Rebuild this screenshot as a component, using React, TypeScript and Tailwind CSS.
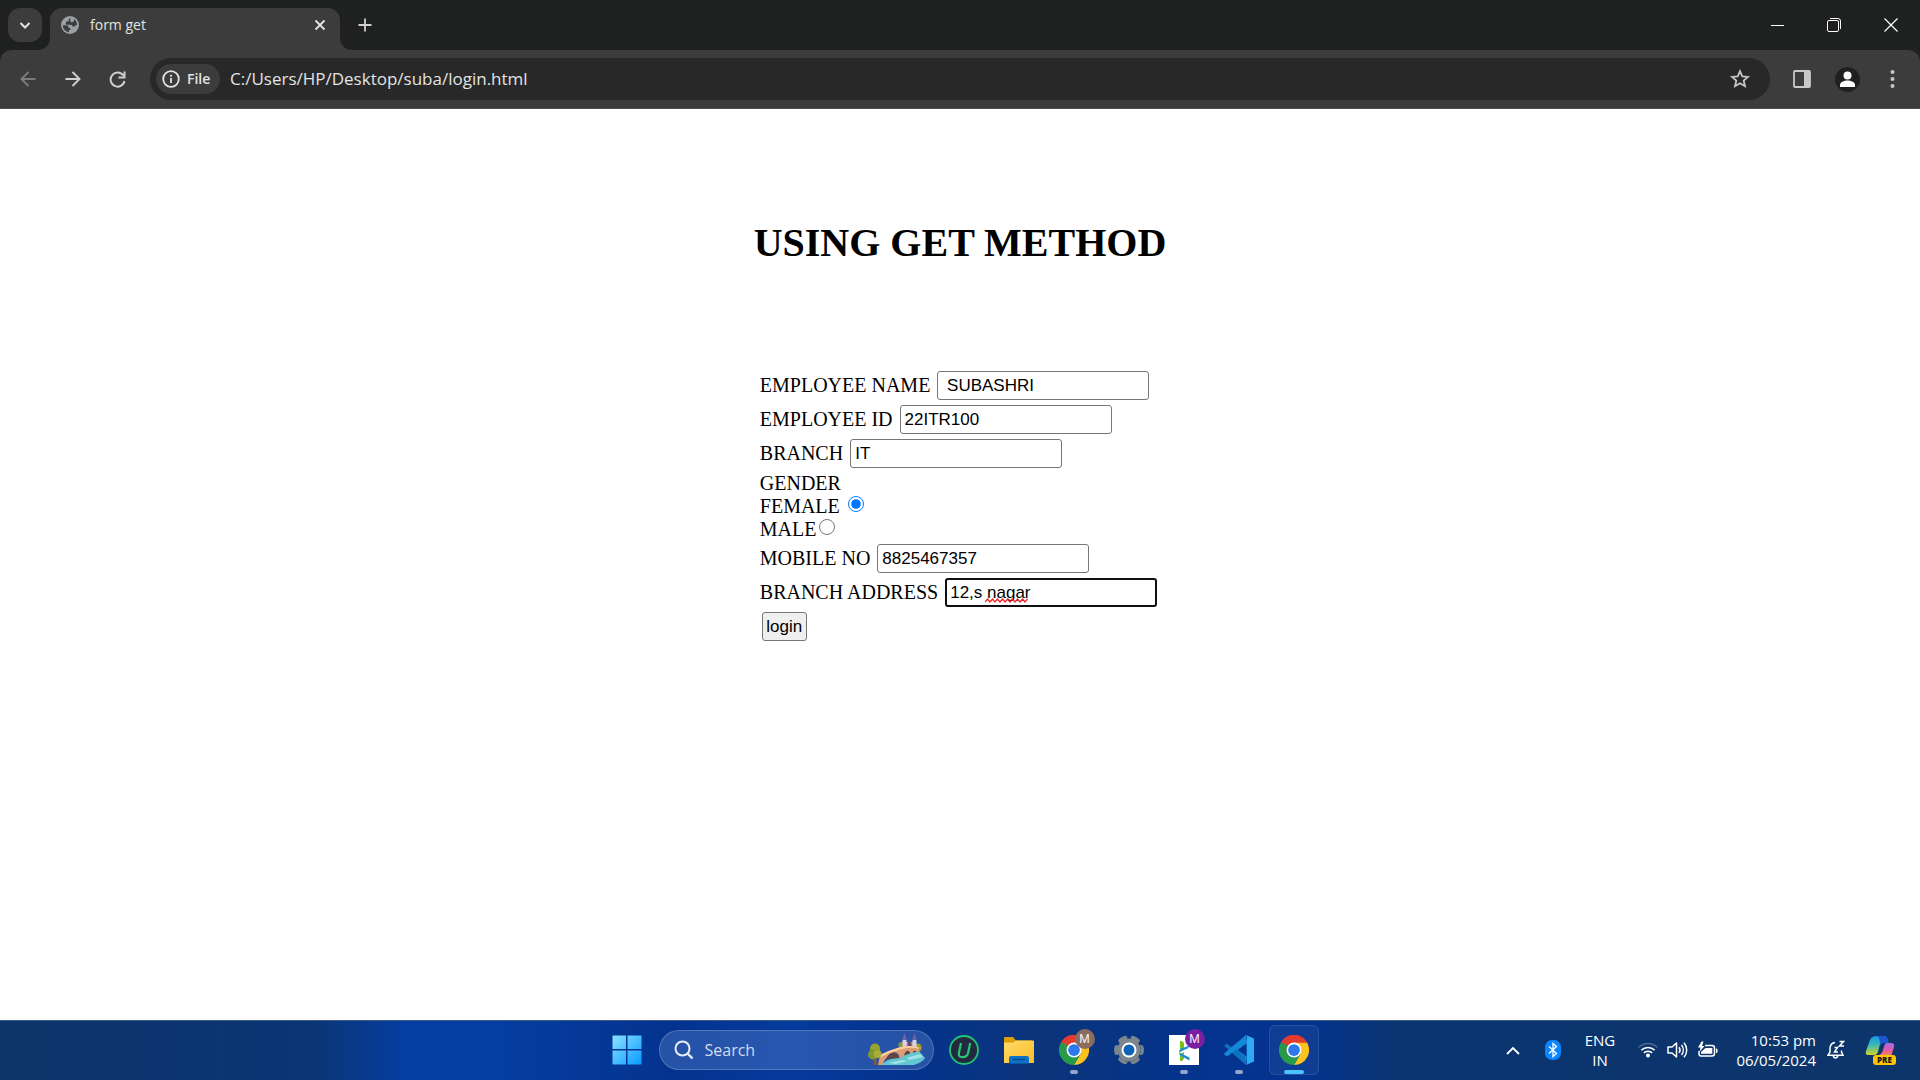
import React from "react";

const serif = "font-['Liberation_Serif',serif]";
const arial = "font-['Liberation_Sans',sans-serif]";

function ChromeLogo() {
  return (
    <svg width="30" height="30" viewBox="0 0 48 48" aria-hidden="true">
      <path d="M24 24 3.2 12A24 24 0 0 1 44.8 12Z" fill="#e33b2e" />
      <path d="M44.8 12A24 24 0 0 1 24 48L34.4 30 24 12Z" fill="#fcc31e" />
      <path d="M3.2 12 13.6 30 24 36 34.4 30 24 48A24 24 0 0 1 3.2 12Z" fill="#269b4b" />
      <path d="M3.2 12A24 24 0 0 1 44.8 12H24L13.6 30Z" fill="#e33b2e" />
      <path d="M3.2 12 13.6 30 18 26 12 15Z" fill="#269b4b" />
      <circle cx="24" cy="24" r="12" fill="#fff" />
      <circle cx="24" cy="24" r="9.4" fill="#2f78ea" />
    </svg>
  );
}

function Castle() {
  return (
    <svg width="58" height="34" viewBox="0 0 58 34" aria-hidden="true">
      <path d="M42 20 51 18 57 25Q55 29 46 32H12L20 27Z" fill="#5fc6d2" />
      <path d="M38 25 52 21 55 24 42 27ZM20 30 34 27 40 28 28 31Z" fill="#a2e3e6" />
      <circle cx="33.500" cy="12" r="3" fill="#8c9a35" />
      <circle cx="49.500" cy="14.500" r="4" fill="#a3a02c" />
      <path d="M35 9H48V16H35Z" fill="#b9a6c2" />
      <path d="M34.500 7H38.500V16H34.500ZM44.500 7H48.500V16H44.500Z" fill="#ded0e0" />
      <path d="M36.500 0 38.800 7H34.200ZM46.500 0 48.800 7H44.200Z" fill="#75619f" />
      <path d="M39.500 10Q41.500 6 43.500 10V13H39.500Z" fill="#6b4a6c" />
      <path d="M40 13H43V16H40Z" fill="#4c3450" />
      <path d="M12 22Q22 17 31 14.500 41 11.500 51 14.500V18.500L48.500 19Q46.500 15 44.500 20L42.500 20.500Q39 14 36 23L32 25Q29 15 20 23L17 26.500 14 32H10Z" fill="#dd9c72" />
      <path d="M12 22Q22 17 31 14.500 41 11.500 51 14.500V15.500Q41 13.500 32 16.500 22 19 12 24.500Z" fill="#fbd2a4" />
      <path d="M18 26.500Q22 17 29 20.500 31 22 31.500 25ZM36 22.500Q38 17.500 40 18 41.500 18.500 42 20.500ZM45 19.500Q46.500 16.500 48 19Z" fill="#5e4547" />
      <path d="M6 22H8.500V32H6Z" fill="#8a5a2c" />
      <circle cx="7" cy="15.500" r="5" fill="#93a52f" />
      <circle cx="5" cy="21.500" r="5" fill="#7d9a2c" />
      <circle cx="9.500" cy="21" r="4" fill="#a9ab34" />
    </svg>
  );
}

function Gear() {
  return (
    <svg width="30" height="30" viewBox="0 0 30 30" aria-hidden="true">
      <g fill="#7d868c">
        <circle cx="15" cy="15" r="11.500" />
        {[0, 60, 120].map((a) => (
          <path key={a} transform={`rotate(${a} 15 15)`} d="M1 10.500 4 10v10l-3-.5Q-.8 15 1 10.500ZM29 10.500 26 10v10l3-.5q1.800-4.500 0-9ZM3.500 11.500h23v7h-23z" />
        ))}
      </g>
      <circle cx="15" cy="15" r="7.500" fill="#fff" />
      <circle cx="15" cy="15" r="5.500" fill="#0c63b6" />
    </svg>
  );
}

function Badge({ color }: { color: string }) {
  return (
    <span className={`absolute top-1 right-1 flex size-5 items-center justify-center rounded-full font-['Roboto',sans-serif] text-xs text-white/90 ${color}`}>
      M
    </span>
  );
}

function TaskItem({ label, running, active, children }: { label: string; running?: boolean; active?: boolean; children: React.ReactNode }) {
  return (
    <button aria-label={label} className={`relative flex size-[50px] items-center justify-center rounded-md ${active ? "border border-white/10 bg-white/5" : ""}`}>
      {children}
      {running && <span className="absolute bottom-px left-[21px] h-1 w-2 rounded-full bg-[#94a6cc]" />}
      {active && <span className="absolute bottom-0 left-[14px] h-1 w-5 rounded-full bg-[#4cc2ff]" />}
    </button>
  );
}

function Field({ id, label, value, children, focused }: { id: string; label: string; value: string; children?: React.ReactNode; focused?: boolean }) {
  return (
    <div className="flex h-[34px] items-center gap-[7px]">
      <label htmlFor={id}>{label}</label>
      <span className="relative flex">
        <input
          id={id}
          type="text"
          defaultValue={value}
          spellCheck={false}
          className={`h-[29px] w-[212px] rounded-[3px] bg-white pt-px text-[17px] outline-none ${arial} ${focused ? "border-2 border-[#101010] px-[3px]" : "border border-[#767676] px-1"}`}
        />
        {children}
      </span>
    </div>
  );
}

function TabStrip() {
  return (
    <header className="flex h-[50px] bg-[#1f2120] text-[#e3e3e3]">
      <button aria-label="Search tabs" className="mt-2 ml-2 flex size-[34px] items-center justify-center rounded-xl bg-[#3c3c3c]">
        <svg width="12" height="12" viewBox="0 0 12 12" fill="none" stroke="#e3e3e3" strokeWidth="2"><path d="M1.500 4 6 8.500 10.500 4" /></svg>
      </button>
      <div className="relative mt-2 ml-2 flex w-[290px] items-center rounded-t-xl bg-[#3c3c3c] pr-[10px] pb-2 pl-[11px]">
        <span className="absolute bottom-0 -left-3 size-3 bg-[#3c3c3c]"><span className="block size-3 rounded-br-xl bg-[#1f2120]" /></span>
        <span className="absolute -right-3 bottom-0 size-3 bg-[#3c3c3c]"><span className="block size-3 rounded-bl-xl bg-[#1f2120]" /></span>
        <svg width="18" height="18" viewBox="0 0 18 18" aria-hidden="true">
          <circle cx="9" cy="9" r="9" fill="#9aa0a6" />
          <path d="M9.300 1.800 7.800 3.500V5.300H5.800L4.800 7V8.800H9.800Q11.600 9 11.600 10.600H13.300Q14.300 10.600 14.600 9.300L16.300 8.800A7.300 7.300 0 0 0 13 3.100V4.300Q13 6.200 11.200 6.200H10.300Q9.400 6.200 9.400 5.300ZM1.700 9.300H5.600Q7.600 9.300 7.600 11.200V12H9.400V14H8V16.300A7.300 7.300 0 0 1 1.700 9.300Z" fill="#3c3c3c" />
        </svg>
        <span className="ml-[11px] text-sm">form get</span>
        <button aria-label="Close tab" className="ml-auto flex size-5 items-center justify-center">
          <svg width="12" height="12" viewBox="0 0 12 12" stroke="#e3e3e3" strokeWidth="1.800"><path d="m1.500 1.500 9 9m0-9-9 9" /></svg>
        </button>
      </div>
      <button aria-label="New tab" className="mt-[11px] ml-[11px] flex size-7 items-center justify-center">
        <svg width="14" height="14" viewBox="0 0 14 14" stroke="#d0d0d0" strokeWidth="1.800"><path d="M7 .5v13M.5 7h13" /></svg>
      </button>
      <div className="ml-auto flex">
        <button aria-label="Minimize" className="flex w-[57px] items-center justify-center">
          <svg width="13" height="13" viewBox="0 0 13 13"><path d="M0 6h13v1H0z" fill="#fff" /></svg>
        </button>
        <button aria-label="Restore" className="flex w-14 items-center justify-center">
          <svg width="14" height="14" viewBox="0 0 14 14" fill="none" stroke="#fff"><rect x=".5" y="2.500" width="11" height="11" rx="1.500" /><path d="M3 .5h8A2.500 2.500 0 0 1 13.500 3v8" /></svg>
        </button>
        <button aria-label="Close" className="flex w-[58px] items-center justify-center">
          <svg width="14" height="14" viewBox="0 0 14 14" stroke="#fff" strokeWidth="1.200"><path d="m.5.5 13 13m0-13-13 13" /></svg>
        </button>
      </div>
    </header>
  );
}

function Toolbar() {
  return (
    <div className="bg-[#1f2120]">
      <div className="flex h-[59px] items-center rounded-t-xl border-b border-[#4d4a4d] bg-[#3c3c3c] text-[#e3e3e3]">
        <nav className="ml-[5px] flex">
          <button aria-label="Back" className="flex w-[45px] justify-center">
            <svg width="16" height="16" viewBox="0 0 16 16" fill="none" stroke="#7c7c7c" strokeWidth="1.900"><path d="M15.500 8H2M8.500 1 1.500 8l7 7" /></svg>
          </button>
          <button aria-label="Forward" className="flex w-[45px] justify-center">
            <svg width="16" height="16" viewBox="0 0 16 16" fill="none" stroke="#d0d0d0" strokeWidth="1.900"><path d="M.5 8H14M7.500 1l7 7-7 7" /></svg>
          </button>
          <button aria-label="Reload" className="flex w-[45px] justify-center">
            <svg width="17" height="17" viewBox="0 0 17 17" fill="none" stroke="#d0d0d0" strokeWidth="2"><path d="M14.300 4.500A7 7 0 1 0 15.500 10M15.500.5V6.500H9.500" /></svg>
          </button>
        </nav>
        <div className="ml-[10px] flex h-[42px] flex-1 items-center rounded-full bg-[#282828] pl-[6px]">
          <button className="flex h-[30px] w-[64px] items-center gap-[7px] rounded-full bg-[#3c3c3c] pl-[6px] text-sm font-semibold">
            <svg width="18" height="18" viewBox="0 0 18 18" fill="none" stroke="#e3e3e3" strokeWidth="1.800"><circle cx="9" cy="9" r="7.800" /><path d="M9 8v5M9 4.800v1.900" /></svg>
            File
          </button>
          <input aria-label="Address" defaultValue="C:/Users/HP/Desktop/suba/login.html" className="ml-[10px] min-w-0 flex-1 bg-transparent text-[17px] outline-none" />
          <button aria-label="Bookmark this tab" className="mr-5">
            <svg width="20" height="20" viewBox="0 0 20 20" fill="none" stroke="#c7c7c7" strokeWidth="1.800"><path d="M10 2.200 12.300 7.400 18 7.900 13.700 11.600 15 17.200 10 14.200 5 17.200 6.300 11.600 2 7.900 7.700 7.400Z" /></svg>
          </button>
        </div>
        <button aria-label="Side panel" className="ml-[23px]">
          <svg width="18" height="18" viewBox="0 0 18 18"><rect x="1" y="1" width="16" height="16" rx="1" fill="none" stroke="#c7c7c7" strokeWidth="1.800" /><path d="M11 1h6v16h-6z" fill="#c7c7c7" /></svg>
        </button>
        <button aria-label="Profile" className="ml-6">
          <svg width="25" height="25" viewBox="0 0 25 25"><circle cx="12.500" cy="12.500" r="12.500" fill="#1f2120" /><circle cx="12.500" cy="8.500" r="4" fill="#fff" /><path d="M5 20v-2c0-3 4-4.500 7.500-4.500S20 15 20 18v2z" fill="#fff" /></svg>
        </button>
        <button aria-label="Menu" className="mr-[25px] ml-[30px]">
          <svg width="5" height="18" viewBox="0 0 5 18" fill="#c7c7c7"><circle cx="2.500" cy="2" r="2" /><circle cx="2.500" cy="9" r="2" /><circle cx="2.500" cy="16" r="2" /></svg>
        </button>
      </div>
    </div>
  );
}

function Taskbar() {
  return (
    <footer className="grid h-[60px] grid-cols-[1fr_auto_1fr] items-center border-t border-[#3c5a86] bg-[linear-gradient(90deg,#0d356b_0%,#0b3573_16%,#053da0_21%,#053da0_26%,#04338f_35%,#053a9c_41%,#04338f_47%,#0b3479_54%,#043390_63%,#04338f_68%,#0b3570_73%,#0d356b_100%)] pb-px text-white">
      <div />
      <div className="flex items-center gap-[5px]">
        <TaskItem label="Start">
          <svg width="30" height="30" viewBox="0 0 30 30">
            <defs><linearGradient id="win" x1="0" y1="0" x2="1" y2="1"><stop offset="0" stopColor="#8be2ff" /><stop offset="1" stopColor="#069bff" /></linearGradient></defs>
            <path d="M1 .5H14V14H.5V1ZM15.500.5H29l.5.5V14h-14ZM.5 15.500H14V29.500H1L.5 29ZM15.500 15.500h14V29l-.5.5H15.500Z" fill="url(#win)" />
          </svg>
        </TaskItem>
        <label className="ml-[2px] flex h-10 w-[275px] items-center rounded-full border border-white/20 bg-[#5b83cc]/40 pr-[7px] pl-[14px]">
          <svg width="20" height="20" viewBox="0 0 20 20" fill="none" stroke="#e8edf8" strokeWidth="2"><circle cx="8.500" cy="8.500" r="7" /><path d="m13.500 13.500 5 5" strokeWidth="2.400" /></svg>
          <input aria-label="Search" placeholder="Search" className="ml-[11px] w-0 flex-1 bg-transparent text-base outline-none placeholder:text-[#d3dcef]" />
          <Castle />
        </label>
        <TaskItem label="Uninstaller">
          <svg width="30" height="30" viewBox="0 0 30 30"><circle cx="15" cy="15" r="14" fill="#242a3e" stroke="#1fc672" strokeWidth="1.800" /><path d="M12 8 10 17.500C9.300 21 10.500 22.200 13.500 22.200S18.500 21 19.200 17.500L21.200 8" fill="none" stroke="#27c77b" strokeWidth="2.200" /></svg>
        </TaskItem>
        <TaskItem label="File Explorer">
          <svg width="30" height="28" viewBox="0 0 30 28">
            <defs><linearGradient id="fold" x1="0" y1="0" x2="1" y2="1"><stop offset="0" stopColor="#ffdc6b" /><stop offset="1" stopColor="#fdbb26" /></linearGradient></defs>
            <path d="M0 2Q0 1 1 1H9L12 4.500H28V10H0Z" fill="#dc9d05" /><path d="M0 6.500H9L12 4.500H29Q30 4.500 30 5.500V27H0Z" fill="url(#fold)" /><path d="M5 27.500V22Q5 20 7 20H23Q25 20 25 22V27.500Z" fill="#0b73c9" /><path d="M9 23.500H21" stroke="#064a8c" strokeWidth="1.500" />
          </svg>
        </TaskItem>
        <TaskItem label="Chrome" running><ChromeLogo /><Badge color="bg-[#8a6c61]" /></TaskItem>
        <TaskItem label="Settings"><Gear /></TaskItem>
        <TaskItem label="Notes" running>
          <svg width="30" height="30" viewBox="0 0 30 30"><path d="M0 0h30v30H0z" fill="#fff" /><path d="M10.500 6C14 6 15 7 15 9V14L11 17V6ZM15 17 11 19V26C14.500 26 15 24 15 22Z" fill="#7bbd1e" /><path d="M20 10.500Q20 14 16 14.500L10 17.500Q10 13.500 14 13ZM10 17.500 20.500 22.500V25.500L12 21Q10 20 10 17.500Z" fill="#1a8fd4" /></svg>
          <Badge color="bg-[#7a1fa2]" />
        </TaskItem>
        <TaskItem label="Visual Studio Code" running>
          <svg width="30" height="30" viewBox="0 0 30 30"><path d="M22 0 8.500 13 3 8.800 1 9.700 .3 11 22 30 23 22V8Z" fill="#0b74c0" /><path d="M22 30 21 21.500 12 15 3 21.400 .3 19.500V18.300L22 0 23 8.500Z" fill="#1488d8" /><path d="M22 0 30 3.500V26.500L22 30Q23 29 23 27.500V2.500Q23 1 22 0Z" fill="#2fa9f4" /><path d="M22.500 8.500v13L13.500 15Z" fill="#04338f" /></svg>
        </TaskItem>
        <TaskItem label="Chrome window" active><ChromeLogo /></TaskItem>
      </div>
      <div className="flex items-center justify-end text-[15px]">
        <button aria-label="Hidden icons" className="mr-[25px]">
          <svg width="14" height="9" viewBox="0 0 14 9" fill="none" stroke="#fff" strokeWidth="1.800"><path d="m1 8 6-6 6 6" /></svg>
        </button>
        <button aria-label="Bluetooth" className="mr-[21px]">
          <svg width="16" height="20" viewBox="0 0 16 20"><rect width="16" height="20" rx="7" fill="#0a84ff" /><path d="m4 6.500 7.500 7L8 16.500v-13l3.500 3-7.500 7" fill="none" stroke="#fff" strokeWidth="1.300" /></svg>
        </button>
        <button className="w-9 text-center leading-5">ENG<br />IN</button>
        <button aria-label="Network, sound and battery" className="ml-5 flex items-center gap-[9px]">
          <svg width="20" height="16" viewBox="0 0 20 16" fill="none" stroke="#fff" strokeWidth="1.500"><path d="M.7 5.500a13 13 0 0 1 18.600 0" stroke="#ffffff40" /><path d="M3.300 8.200a9.500 9.500 0 0 1 13.400 0M5.800 10.900a6 6 0 0 1 8.400 0" /><circle cx="10" cy="13.500" r="2" fill="#fff" stroke="none" /></svg>
          <svg width="21" height="18" viewBox="0 0 21 18" fill="none" stroke="#fff" strokeWidth="1.500" strokeLinejoin="round"><path d="M1 6h4l4.500-4v14L5 12H1ZM12 6.200a4.500 4.500 0 0 1 0 5.600M14.500 4a8 8 0 0 1 0 10M17 1.800a11 11 0 0 1 0 14.400" /></svg>
          <svg width="21" height="18" viewBox="0 0 21 18"><path d="M8 4.500h7q2.500 0 2.500 2.500v5.500q0 2.500-2.500 2.500H4q-2 0-2-2.500V10" fill="none" stroke="#fff" strokeWidth="1.500" /><path d="M8.500 7H15.300V12.800H4V11Z" fill="#fff" /><path d="M19 7.500q1.500 0 1.500 1v2.500q0 1-1.500 1zM4.500.5 1 6.500h2.500L2.500 11 7.500 5H5L6.500.5Z" fill="#fff" /></svg>
        </button>
        <button className="ml-4 w-[82px] text-right leading-5">10:53 pm<br />06/05/2024</button>
        <button aria-label="Notifications" className="ml-[11px]">
          <svg width="18" height="20" viewBox="0 0 18 20" fill="none" stroke="#fff" strokeWidth="1.500"><path d="M8 2.500Q3.500 3 3 8v4L1 15.200H16L14.500 12V10.500M6 16q2.500 4 5 0M7.500 7.500h3L7.500 12h3.500M12.500 1.500h4l-4 4.500H17" /></svg>
        </button>
        <button aria-label="Copilot" className="mr-6 ml-5">
          <svg width="31" height="30" viewBox="0 0 31 30">
            <defs>
              <linearGradient id="cpa" x1="0" y1="0" x2="0" y2="1"><stop offset="0" stopColor="#189de0" /><stop offset=".45" stopColor="#36b6ba" /><stop offset="1" stopColor="#d0d728" /></linearGradient>
              <linearGradient id="cpb" x1="0" y1="0" x2="0" y2="1"><stop offset="0" stopColor="#a56be8" /><stop offset=".6" stopColor="#e45ba8" /><stop offset="1" stopColor="#f68157" /></linearGradient>
            </defs>
            <path d="M12 1H19Q21.500 1 22.500 4L23.500 8H18Q15.500 8 14.500 11L13 17Q12 20 9 20H3Q0 20 1 16L5 5Q6.500 1 12 1Z" fill="url(#cpa)" />
            <path d="M12 1H19Q21.500 1 22.500 4L23.500 8H18Q16 8 15 9Q15 3 12 1Z" fill="#1f55d2" />
            <path d="M22 8H26Q30 8 29 12L26.500 20H14Q17 19 18 15L19.500 10Q20 8 22 8Z" fill="url(#cpb)" />
            <rect x="8" y="20" width="23" height="10" rx="3" fill="#fdc400" />
            <text x="19.500" y="28" textAnchor="middle" fontFamily="Open Sans, sans-serif" fontWeight="800" fontSize="8" fill="#1b1b1b">PRE</text>
          </svg>
        </button>
      </div>
    </footer>
  );
}

export default function App() {
  return (
    <div className="flex min-h-screen flex-col bg-white font-['Open_Sans',sans-serif]">
      <TabStrip />
      <Toolbar />
      <main className={`flex-1 text-black ${serif}`}>
        <h1 className="mt-[111px] text-center text-[40px] leading-[46px] font-bold">USING GET METHOD</h1>
        <form className="mx-auto mt-[102px] w-fit pr-[3px] text-[20px] leading-[23px]" onSubmit={(e) => e.preventDefault()}>
          <Field id="name" label="EMPLOYEE NAME" value=" SUBASHRI" />
          <Field id="empid" label="EMPLOYEE ID" value="22ITR100" />
          <Field id="branch" label="BRANCH" value="IT" />
          <fieldset className="pt-[2px]">
            <legend className="contents">GENDER</legend>
            <div className="flex gap-2">
              <label htmlFor="female">FEMALE</label>
              <input id="female" type="radio" name="gender" defaultChecked className="mt-px size-4 accent-[#0075ff]" />
            </div>
            <div className="flex gap-[3px]">
              <label htmlFor="male">MALE</label>
              <input id="male" type="radio" name="gender" className="mt-px size-4 accent-[#0075ff]" />
            </div>
          </fieldset>
          <Field id="mobile" label="MOBILE NO" value="8825467357" />
          <Field id="address" label="BRANCH ADDRESS" value="12,s nagar" focused>
            <svg className="absolute top-5 left-10" width="43" height="5" viewBox="0 0 43 5" fill="none" stroke="#f02020" strokeWidth="1.200" aria-hidden="true">
              <path d="M0 4 2.500 1 5 4 7.500 1 10 4 12.500 1 15 4 17.500 1 20 4 22.500 1 25 4 27.500 1 30 4 32.500 1 35 4 37.500 1 40 4 42.500 1" />
            </svg>
          </Field>
          <div className="flex h-[34px] items-center">
            <button type="submit" className={`ml-[2px] h-[29px] w-[45px] rounded-[3px] border border-[#767676] bg-[#efefef] text-[17px] ${arial}`}>login</button>
          </div>
        </form>
      </main>
      <Taskbar />
    </div>
  );
}
